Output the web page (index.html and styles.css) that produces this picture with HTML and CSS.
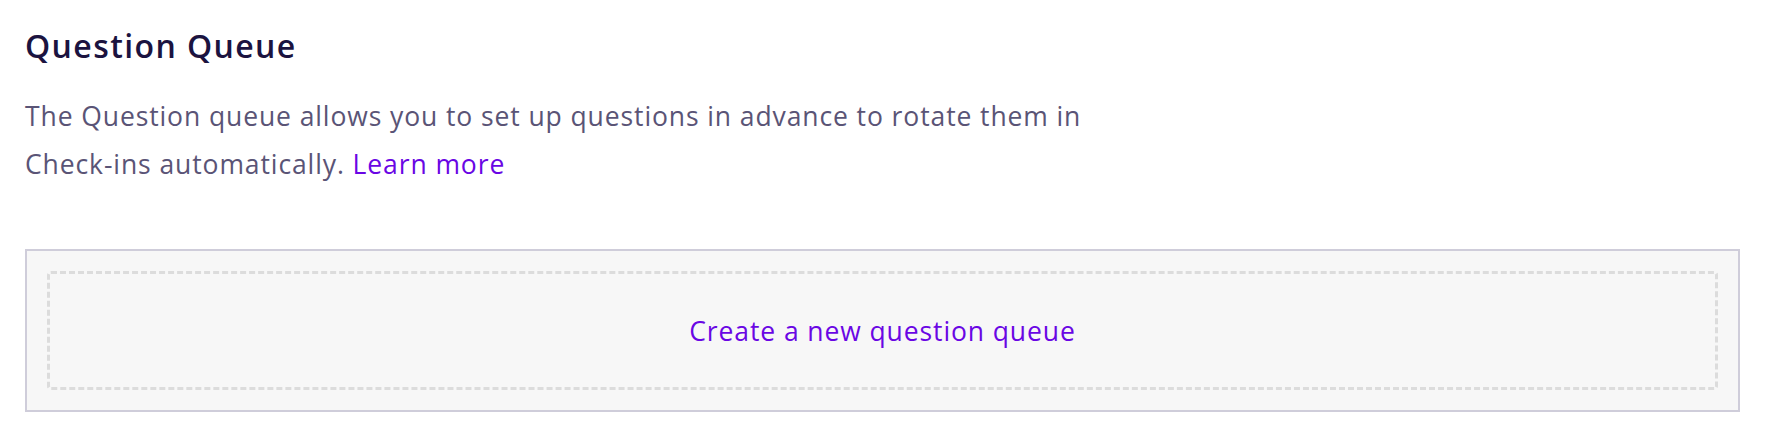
FILE: index.html
```html
<!DOCTYPE html>
<html lang="en">
<head>
<meta charset="utf-8">
<title>Question Queue</title>
<link rel="stylesheet" href="styles.css">
</head>
<body>
<section class="page">
  <h1 class="title">Question Queue</h1>
  <p class="desc">The Question queue allows you to set up questions in advance to rotate them in <span class="nowrap">Check-ins</span> automatically. <a class="link" href="#">Learn more</a></p>
  <div class="panel">
    <button class="create" type="button">Create a new question queue</button>
  </div>
</section>
</body>
</html>
```
FILE: styles.css
```css
html, body {
  margin: 0;
  padding: 0;
  background: #ffffff;
}

.page {
  padding: 0 26px 0 25px;
  font-family: "Open Sans", "Noto Sans", sans-serif;
}

.title {
  margin: 0;
  padding-top: 26px;
  font-size: 32px;
  line-height: 40px;
  font-weight: 600;
  letter-spacing: 1.4px;
  color: #1b1340;
}

.desc {
  margin: 26px 0 0 0;
  max-width: 1110px;
  font-size: 26.5px;
  line-height: 48px;
  font-weight: 400;
  letter-spacing: 0.9px;
  color: #5a5476;
}

.nowrap {
  white-space: nowrap;
}

.link {
  color: #6a06e4;
  text-decoration: none;
}

.panel {
  margin-top: 61px;
  border: 2px solid #cfcdda;
  background: #f7f7f7;
  padding: 20px;
}

.create {
  display: flex;
  align-items: center;
  justify-content: center;
  width: 100%;
  height: 119px;
  box-sizing: border-box;
  border: 3px dashed #dcdcdc;
  border-radius: 4px;
  background: transparent;
  font-family: "Open Sans", "Noto Sans", sans-serif;
  font-size: 26.5px;
  letter-spacing: 0.9px;
  color: #6a06e4;
  cursor: pointer;
}
```
